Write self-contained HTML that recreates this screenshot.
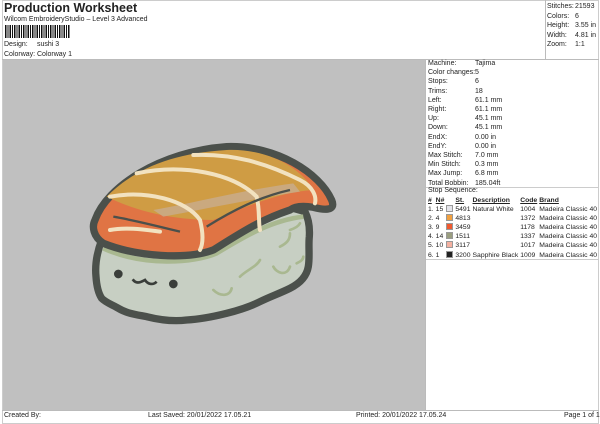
<!DOCTYPE html>
<html><head><meta charset="utf-8"><style>
*{margin:0;padding:0;box-sizing:border-box}
body{width:600px;height:424px;background:#fff;font-family:"Liberation Sans",sans-serif;font-size:7px;color:#222;position:relative;overflow:hidden}
.a{position:absolute;white-space:nowrap}
.frame{position:absolute;border:1px solid #bbb}
table{position:absolute;left:427px;border-collapse:collapse;font-size:6.8px}
td{padding:0 1px;height:9.1px;line-height:9.1px;white-space:nowrap}
.sw{display:inline-block;width:7px;height:7px;vertical-align:-1px;border:1px solid #999}
</style></head><body>
<div class="a" style="left:4px;top:1px;font-size:12.5px;font-weight:bold">Production Worksheet</div>
<div class="a" style="left:4px;top:16px;font-size:7px">Wilcom EmbroideryStudio – Level 3 Advanced</div>
<div class="a" style="left:5px;top:25px;width:65px;height:13px;background:repeating-linear-gradient(90deg,#111 0 1.5px,#fff 1.5px 2.5px,#111 2.5px 3.5px,#fff 3.5px 4.5px)"></div>
<div class="a" style="left:4px;top:41px">Design:</div><div class="a" style="left:37px;top:41px">sushi 3</div>
<div class="a" style="left:4px;top:51px">Colorway:</div><div class="a" style="left:37px;top:51px">Colorway 1</div>
<div class="frame" style="left:2px;top:0;width:597px;height:424px;border-color:#ccc"></div>
<div class="a" style="left:545px;top:0;width:1px;height:60px;background:#bbb"></div>
<div class="a" style="left:2px;top:59px;width:597px;height:1px;background:#bbb"></div>
<div class="a" style="left:547px;top:2px;line-height:9.6px">Stitches:<br>Colors:<br>Height:<br>Width:<br>Zoom:</div>
<div class="a" style="left:575px;top:2px;line-height:9.6px">21593<br>6<br>3.55 in<br>4.81 in<br>1:1</div>
<div class="a" style="left:3px;top:60px;width:422px;height:350px;background:#c0c0c0"></div>
<div class="a" style="left:425px;top:60px;width:1px;height:350px;background:#bbb"></div>
<div class="a" style="left:428px;top:59px;line-height:9.2px">Machine:<br>Color changes:<br>Stops:<br>Trims:<br>Left:<br>Right:<br>Up:<br>Down:<br>EndX:<br>EndY:<br>Max Stitch:<br>Min Stitch:<br>Max Jump:<br>Total Bobbin:</div>
<div class="a" style="left:475px;top:59px;line-height:9.2px">Tajima<br>5<br>6<br>18<br>61.1 mm<br>61.1 mm<br>45.1 mm<br>45.1 mm<br>0.00 in<br>0.00 in<br>7.0 mm<br>0.3 mm<br>6.8 mm<br>185.04ft</div>
<div class="a" style="left:426px;top:187px;width:173px;height:1px;background:#ccc"></div>
<div class="a" style="left:428px;top:187px">Stop Sequence:</div>
<table style="top:196px">
<tr style="text-decoration:underline;font-weight:bold"><td>#</td><td>N#</td><td></td><td>St.</td><td>Description</td><td>Code</td><td>Brand</td></tr>
<tr><td>1.</td><td>15</td><td><i class="sw" style="background:#e4e4ea"></i></td><td>5491</td><td>Natural White</td><td>1004</td><td>Madeira Classic 40</td></tr>
<tr><td>2.</td><td>4</td><td><i class="sw" style="background:#f0a040"></i></td><td>4813</td><td></td><td>1372</td><td>Madeira Classic 40</td></tr>
<tr><td>3.</td><td>9</td><td><i class="sw" style="background:#f05a30"></i></td><td>3459</td><td></td><td>1178</td><td>Madeira Classic 40</td></tr>
<tr><td>4.</td><td>14</td><td><i class="sw" style="background:#9a9e80"></i></td><td>1511</td><td></td><td>1337</td><td>Madeira Classic 40</td></tr>
<tr><td>5.</td><td>10</td><td><i class="sw" style="background:#f4b0a0"></i></td><td>3117</td><td></td><td>1017</td><td>Madeira Classic 40</td></tr>
<tr><td>6.</td><td>1</td><td><i class="sw" style="background:#222"></i></td><td>3200</td><td>Sapphire Black</td><td>1009</td><td>Madeira Classic 40</td></tr>
</table>
<div class="a" style="left:426px;top:259px;width:173px;height:1px;background:#ccc"></div>
<div class="a" style="left:2px;top:410px;width:597px;height:1px;background:#bbb"></div>
<div class="a" style="left:4px;top:412px">Created By:</div>
<div class="a" style="left:148px;top:412px">Last Saved: 20/01/2022 17.05.21</div>
<div class="a" style="left:356px;top:412px">Printed: 20/01/2022 17.05.24</div>
<div class="a" style="left:564px;top:412px">Page 1 of 1</div>
<svg class="a" style="left:0;top:0" width="600" height="424">
<g transform="translate(60,120) scale(0.3333)">
<path d="M125 360 C110 400 105 440 108 470 C110 500 115 520 125 535 C140 550 160 555 175 565 C200 580 230 585 260 590 C300 600 340 605 380 600 C420 598 460 590 500 580 C540 570 570 560 600 545 C630 530 660 520 690 505 C720 490 740 470 745 440 C750 410 745 380 748 350 C750 320 745 295 735 275 L700 265 C620 290 560 320 470 380 C400 415 250 420 125 360Z" fill="#c7cfc3" stroke="#4b504b" stroke-width="22" stroke-linejoin="round"/>
<path d="M130 385 C250 440 400 430 470 400 C560 345 640 300 730 290" fill="none" stroke="#a9b890" stroke-width="14"/>
<path d="M105 300 C140 200 300 95 500 80 C650 75 780 160 815 240 C830 275 790 270 760 262 C720 255 700 262 690 270 C600 300 540 340 460 390 C380 420 230 410 130 370 C100 350 95 320 105 300Z" fill="#e07444" stroke="#4b504b" stroke-width="22" stroke-linejoin="round"/>
<path d="M140 230 C220 150 330 100 500 90 C620 85 720 140 760 210 C660 215 560 260 460 300 C330 300 220 270 140 230Z" fill="#cf9c44"/>
<path d="M280 270 C400 250 550 210 700 190 L720 215 C560 240 420 270 310 290Z" fill="#c8ad8e" opacity=".8"/>
<g fill="none" stroke="#f2e2c0" stroke-width="12" stroke-linecap="round">
<path d="M150 230 C260 210 380 240 420 300 C430 340 430 370 420 390"/>
<path d="M230 160 C370 130 520 160 590 230 C600 270 595 310 600 330"/>
<path d="M400 105 C520 100 620 130 720 180 C760 200 770 230 765 250"/>
<path d="M150 330 C200 320 260 330 300 335"/>
</g>
<path d="M160 290 C220 300 300 320 360 335 M440 320 C520 270 600 230 690 210" fill="none" stroke="#4b504b" stroke-width="7"/>
<circle cx="175" cy="462" r="13" fill="#3a3e3a"/><circle cx="340" cy="492" r="13" fill="#3a3e3a"/>
<path d="M218 478 C230 495 245 485 255 480 C265 495 280 495 290 485" fill="none" stroke="#3a3e3a" stroke-width="8"/>
<g fill="none" stroke="#a9b890" stroke-width="8" stroke-linecap="round">
<path d="M540 470 C560 450 590 440 600 420"/><path d="M640 440 C650 460 680 470 690 440"/><path d="M460 510 C480 530 510 530 515 505"/><path d="M660 380 C680 370 690 360 690 340"/><path d="M690 330 C705 325 715 320 720 310"/><path d="M710 430 C720 425 730 420 730 410"/>
</g>
</g>
</svg>
</body></html>
